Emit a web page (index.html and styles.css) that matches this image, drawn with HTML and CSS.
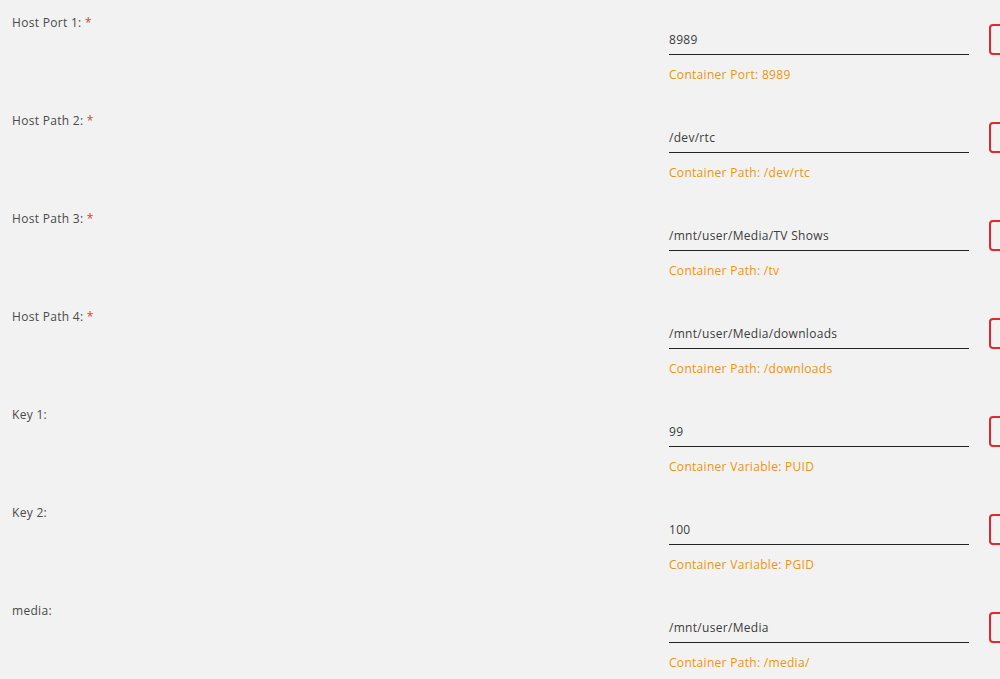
FILE: index.html
```html
<!DOCTYPE html>
<html lang="en">
<head>
    <meta charset="UTF-8">
    <title>Container Settings</title>
    <link rel="stylesheet" href="styles.css">
</head>
<body>
    <div class="form">
        <div class="row">
            <div class="label">Host Port 1: <span class="req">*</span></div>
            <div class="field">
                <div class="input">8989</div>
                <div class="hint">Container Port: 8989</div>
            </div>
            <div class="btn"></div>
        </div>
        <div class="row">
            <div class="label">Host Path 2: <span class="req">*</span></div>
            <div class="field">
                <div class="input">/dev/rtc</div>
                <div class="hint">Container Path: /dev/rtc</div>
            </div>
            <div class="btn"></div>
        </div>
        <div class="row">
            <div class="label">Host Path 3: <span class="req">*</span></div>
            <div class="field">
                <div class="input">/mnt/user/Media/TV Shows</div>
                <div class="hint">Container Path: /tv</div>
            </div>
            <div class="btn"></div>
        </div>
        <div class="row">
            <div class="label">Host Path 4: <span class="req">*</span></div>
            <div class="field">
                <div class="input">/mnt/user/Media/downloads</div>
                <div class="hint">Container Path: /downloads</div>
            </div>
            <div class="btn"></div>
        </div>
        <div class="row">
            <div class="label">Key 1:</div>
            <div class="field">
                <div class="input">99</div>
                <div class="hint">Container Variable: PUID</div>
            </div>
            <div class="btn"></div>
        </div>
        <div class="row">
            <div class="label">Key 2:</div>
            <div class="field">
                <div class="input">100</div>
                <div class="hint">Container Variable: PGID</div>
            </div>
            <div class="btn"></div>
        </div>
        <div class="row">
            <div class="label">media:</div>
            <div class="field">
                <div class="input">/mnt/user/Media</div>
                <div class="hint">Container Path: /media/</div>
            </div>
            <div class="btn"></div>
        </div>
    </div>
</body>
</html>
```

FILE: styles.css
```css
html, body{
    margin: 0;
    padding: 0;
    background: #f2f2f2;
    overflow: hidden;
}
body{
    font-family: "Open Sans", "Liberation Sans", sans-serif;
    font-size: 12px;
    letter-spacing: 0.3px;
    color: #444;
}
.form{
    padding-top: 10px;
}
.row{
    display: grid;
    grid-template-columns: 657px 300px 60px;
    height: 98px;
    padding-left: 12px;
}
.label{
    padding-top: 1px;
    line-height: 24px;
    color: #4a4a4a;
}
.req{
    color: #e53935;
}
.field{
    padding-top: 18px;
}
.input{
    line-height: 24px;
    padding-bottom: 2px;
    border-bottom: 1px solid #222;
    color: #3c3c3c;
}
.hint{
    margin-top: 10px;
    line-height: 20px;
    color: #f0940f;
}
.btn{
    margin: 14px 0 0 20px;
    height: 27px;
    width: 36px;
    border: 2px solid #e22828;
    border-radius: 4px;
}
```
